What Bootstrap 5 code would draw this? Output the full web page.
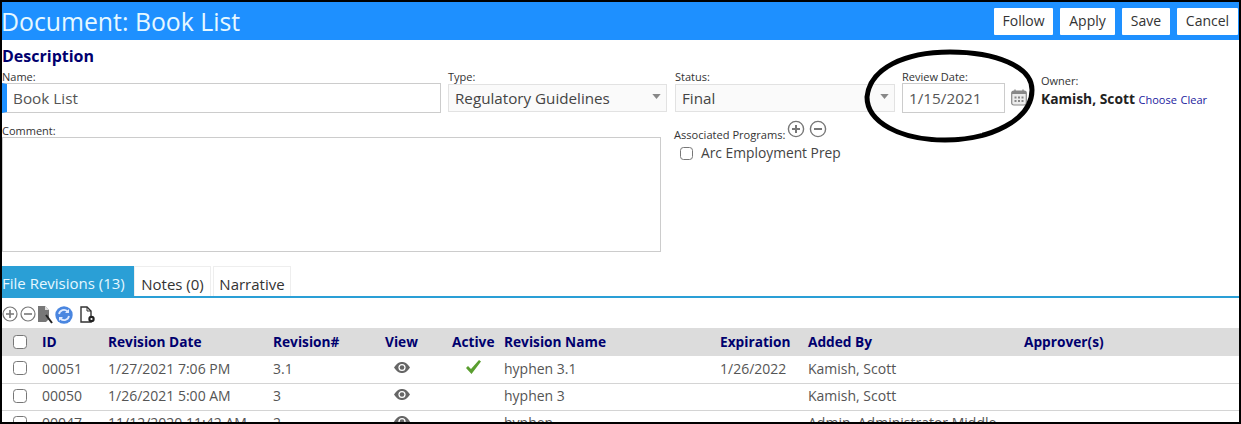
<!DOCTYPE html>
<html lang="en">
<head>
  <meta charset="UTF-8">
  <meta name="viewport" content="width=device-width, initial-scale=1.0">
  <title>Document: Book List</title>
  <link rel="stylesheet" href="https://cdn.jsdelivr.net/npm/bootstrap@5.3.0/dist/css/bootstrap.min.css">
  <style>
    html, body { height: 424px; overflow: hidden; background: #fff; }
    body { font-family: "Open Sans", "Liberation Sans", sans-serif; color: #444; font-size: 14px; }
    .doc-frame { position: relative; height: 424px; border: 2px solid #000; overflow: hidden; }
    .doc-head { height: 38px; background: #1e90ff; padding-right: 1px; }
    .doc-title { font-size: 24.8px; font-weight: 400; color: #e6f8ff; margin: 0 0 0 -1px; line-height: 36px; }
    .head-btn { background: #fff; color: #333; border: 0; border-radius: 1px; height: 27px; padding: 0 0 2px; font-size: 14px; margin-left: 7px; }
    .head-btn:hover { background: #fff; color: #333; }
    .w-follow { width: 59px; } .w-apply { width: 55px; } .w-save { width: 48px; } .w-cancel { width: 61px; }
    .sec-title { font-size: 16px; font-weight: 700; color: #00006e; line-height: 20px; margin: 6px 0 0; }
    .fld-label { display: block; font-size: 11px; line-height: 13px; color: #333; margin: 0; }
    .fld-row { margin-top: 4px; }
    .fld-name { width: 439px; margin-right: 7px; }
    .fld-type { width: 219px; margin-right: 8px; }
    .fld-status { width: 220px; margin-right: 7px; }
    .fld-date { width: 103px; }
    .fld-owner { margin-left: 14px; padding-top: 4px; }
    .fld-input { height: 30px; border: 1px solid #ccc; border-radius: 0; font-size: 15.3px; color: #555; padding: 0 6px; box-shadow: none; }
    .fld-name .fld-input { border-left: 5px solid #1e90ff; padding-left: 6px; }
    .fld-select { height: 28px; margin-top: 1px; border: 1px solid #e2e2e2; border-radius: 0; background-color: #fafafa; font-size: 15.2px; color: #444; padding: 0 20px 0 6px; background-size: 9px 5px; background-position: right 5px top 9px;
      background-image: url("data:image/svg+xml,%3Csvg xmlns='http://www.w3.org/2000/svg' viewBox='0 0 10 6'%3E%3Cpath fill='%23888' d='M0 0h10L5 6z'/%3E%3C/svg%3E"); }
    .cal-icon { margin: 19px 0 0 6px; }
    .owner-name { font-size: 13.8px; font-weight: 700; color: #222; line-height: 23px; }
    .owner-link { font-size: 11px; color: #1a1a9e; text-decoration: none; }
    .fld-comment { width: 659px; margin-right: 13px; margin-top: 11px; }
    .fld-comment textarea { height: 115px; border: 1px solid #ccc; border-radius: 0; resize: none; box-shadow: none; }
    .assoc-box { margin-top: 7px; }
    .assoc-label { font-size: 11.1px; line-height: 13px; margin-top: 8px; color: #333; }
    .assoc-icons { margin-left: 2px; }
    .prog-check { margin: 2px 0 0 6px; font-size: 13.8px; color: #444; }
    .prog-check input { width: 13px; height: 13px; margin: 0 8px 0 0; border: 1px solid #777; border-radius: 2px; }
    .doc-tabs { margin-top: 14px; border-bottom: 2px solid #2a9fd6; height: 32px; }
    .doc-tab { display: block; height: 30px; line-height: 35px; font-size: 15px; color: #333; background: #fff; border: 1px solid #eee; border-bottom: 0; text-decoration: none; padding: 0; text-align: center; margin-right: 2px; white-space: nowrap; }
    .doc-tab.on { background: #2a9fd6; color: #e6f8ff; border: 0; width: 132px; margin-right: 0; text-align: left; }
    .tab-notes { width: 77px; } .tab-narr { width: 78px; }
    .tool-row { height: 30px; padding-top: 8px; gap: 1px; }
    .rev-table { table-layout: fixed; width: 1237px; margin: 0; font-size: 14px; color: #555; }
    .rev-table th { background: #dcdcdc; color: #00006e; font-weight: 700; height: 28px; padding: 0; vertical-align: middle; border: 0; font-size: 13.7px; }
    .rev-table td { height: 27px; padding: 0 0 2px; vertical-align: middle; border-bottom: 1px solid #d4d4d4; color: #555; white-space: nowrap; }
    .rev-table input { width: 14px; height: 14px; margin: 0 0 0 11px; border: 1px solid #777; border-radius: 2px; display: block; }
    .c-sel { width: 40px; } .c-id { width: 66px; } .c-date { width: 165px; } .c-rev { width: 112px; }
    .c-view { width: 67px; } .c-act { width: 52px; } .c-name { width: 216px; } .c-exp { width: 88px; }
    .c-add { width: 216px; }
    .eye-mark { display: block; margin: 0 0 2px 9px; }
    .ok-mark { display: block; margin: 0 0 3px 14px; }
    .ring-mark { position: absolute; left: 860px; top: 47px; }
  </style>
</head>
<body>
  <div class="doc-frame">
    <div class="doc-head d-flex justify-content-between align-items-center">
      <h1 class="doc-title">Document: Book List</h1>
      <div class="d-flex">
        <button class="btn head-btn w-follow">Follow</button>
        <button class="btn head-btn w-apply">Apply</button>
        <button class="btn head-btn w-save">Save</button>
        <button class="btn head-btn w-cancel">Cancel</button>
      </div>
    </div>

    <h2 class="sec-title">Description</h2>
    <div class="d-flex fld-row">
      <div class="fld-name">
        <label class="fld-label">Name:</label>
        <input class="form-control fld-input" value="Book List">
      </div>
      <div class="fld-type">
        <label class="fld-label">Type:</label>
        <select class="form-select fld-select"><option>Regulatory Guidelines</option></select>
      </div>
      <div class="fld-status">
        <label class="fld-label">Status:</label>
        <select class="form-select fld-select"><option>Final</option></select>
      </div>
      <div class="fld-date">
        <label class="fld-label">Review Date:</label>
        <input class="form-control fld-input" value="1/15/2021">
      </div>
      <svg class="cal-icon" width="16" height="17" viewBox="0 0 16 17">
        <rect x="0.7" y="2" width="14.6" height="14" rx="2" fill="#ececec" stroke="#888" stroke-width="1.2"/>
        <rect x="1" y="2" width="14" height="3" fill="#888"/>
        <path d="M4 0.5v3M12 0.5v3" stroke="#888" stroke-width="1.4"/>
        <path d="M3.5 7.5h2v2h-2zM7 7.5h2v2H7zM10.5 7.5h2v2h-2zM3.5 11h2v2h-2zM7 11h2v2H7zM10.5 11h2v2h-2z" fill="#888"/>
      </svg>
      <div class="fld-owner">
        <label class="fld-label">Owner:</label>
        <span class="owner-name">Kamish, Scott</span>
        <a class="owner-link" href="#">Choose</a>
        <a class="owner-link" href="#">Clear</a>
      </div>
    </div>

    <div class="d-flex">
      <div class="fld-comment">
        <label class="fld-label">Comment:</label>
        <textarea class="form-control"></textarea>
      </div>
      <div class="assoc-box">
        <div class="d-flex align-items-start">
          <span class="assoc-label">Associated Programs:</span>
          <svg class="assoc-icons" width="40" height="18" viewBox="0 0 40 18" fill="none" stroke="#777" stroke-width="1.4">
            <circle cx="9" cy="9" r="7.6"/><path d="M5 9h8M9 5v8" stroke-width="2"/>
            <circle cx="31" cy="9" r="7.6"/><path d="M27 9h8" stroke-width="2"/>
          </svg>
        </div>
        <div class="d-flex align-items-center prog-check">
          <input type="checkbox" class="form-check-input"><span>Arc Employment Prep</span>
        </div>
      </div>
    </div>

    <div class="doc-tabs d-flex">
      <a class="doc-tab on" href="#">File Revisions (13)</a>
      <a class="doc-tab tab-notes" href="#">Notes (0)</a>
      <a class="doc-tab tab-narr" href="#">Narrative</a>
    </div>

    <div class="tool-row d-flex align-items-start">
      <svg width="16" height="16" viewBox="0 0 16 16" fill="none" stroke="#777" stroke-width="1.2"><circle cx="8" cy="8" r="7"/><path d="M4 8h8M8 4v8" stroke-width="1.6"/></svg>
      <svg width="17" height="16" viewBox="0 0 17 16" fill="none" stroke="#777" stroke-width="1.2"><circle cx="9" cy="8" r="7"/><path d="M5 8h8" stroke-width="1.6"/></svg>
      <svg width="16" height="18" viewBox="0 0 16 18"><path d="M1 0h7l4 4v9l-3 3H1z" fill="#777"/><path d="M8 0v4h4z" fill="#ddd"/><path d="M9 9l6 8" stroke="#222" stroke-width="2"/></svg>
      <svg width="20" height="18" viewBox="0 0 20 18"><circle cx="10" cy="9" r="8.700" fill="#4a86e0"/><path d="M5 8a5 5 0 0 1 8.500-2.500M15 10a5 5 0 0 1-8.500 2.500" fill="none" stroke="#dfeaff" stroke-width="1.800"/><path d="M15 3v4h-4zM5 15v-4h4z" fill="#dfeaff"/></svg>
      <svg class="ms-1" width="17" height="18" viewBox="0 0 17 18"><path d="M2 1h6l4 4v11H2z" fill="#fff" stroke="#333" stroke-width="1.400"/><path d="M8 1v4h4" fill="none" stroke="#333"/><circle cx="12.500" cy="13" r="3.200" fill="#222"/><circle cx="12.500" cy="13" r="1.100" fill="#fff"/></svg>
    </div>

    <table class="table rev-table">
      <colgroup>
        <col class="c-sel"><col class="c-id"><col class="c-date"><col class="c-rev"><col class="c-view"><col class="c-act"><col class="c-name"><col class="c-exp"><col class="c-add"><col>
      </colgroup>
      <thead>
        <tr>
          <th><input type="checkbox" class="form-check-input"></th>
          <th>ID</th><th>Revision Date</th><th>Revision#</th><th>View</th><th>Active</th><th>Revision Name</th><th>Expiration</th><th>Added By</th><th>Approver(s)</th>
        </tr>
      </thead>
      <tbody>
        <tr>
          <td><input type="checkbox" class="form-check-input"></td>
          <td>00051</td><td>1/27/2021 7:06 PM</td><td>3.1</td>
          <td><svg class="eye-mark" width="16" height="11" viewBox="0 0 16 11"><path d="M0 5.500C3 1 5.500 0 8 0s5 1 8 5.500C13 10 10.500 11 8 11S3 10 0 5.500z" fill="#666"/><circle cx="8" cy="5.500" r="3.600" fill="#fff"/><circle cx="8" cy="5.500" r="2.300" fill="#666"/></svg></td>
          <td><svg class="ok-mark" width="15" height="14" viewBox="0 0 15 14"><path d="M0 8l2-2 3 3 8-9 2 1.500L5.500 14z" fill="#5a9e2f"/></svg></td>
          <td>hyphen 3.1</td><td>1/26/2022</td><td>Kamish, Scott</td><td></td>
        </tr>
        <tr>
          <td><input type="checkbox" class="form-check-input"></td>
          <td>00050</td><td>1/26/2021 5:00 AM</td><td>3</td>
          <td><svg class="eye-mark" width="16" height="11" viewBox="0 0 16 11"><path d="M0 5.500C3 1 5.500 0 8 0s5 1 8 5.500C13 10 10.500 11 8 11S3 10 0 5.500z" fill="#666"/><circle cx="8" cy="5.500" r="3.600" fill="#fff"/><circle cx="8" cy="5.500" r="2.300" fill="#666"/></svg></td>
          <td></td>
          <td>hyphen 3</td><td></td><td>Kamish, Scott</td><td></td>
        </tr>
        <tr>
          <td><input type="checkbox" class="form-check-input"></td>
          <td>00047</td><td>11/12/2020 11:42 AM</td><td>2</td>
          <td><svg class="eye-mark" width="16" height="11" viewBox="0 0 16 11"><path d="M0 5.500C3 1 5.500 0 8 0s5 1 8 5.500C13 10 10.500 11 8 11S3 10 0 5.500z" fill="#666"/><circle cx="8" cy="5.500" r="3.600" fill="#fff"/><circle cx="8" cy="5.500" r="2.300" fill="#666"/></svg></td>
          <td></td>
          <td>hyphen</td><td></td><td>Admin, Administrator Middle</td><td></td>
        </tr>
      </tbody>
    </table>

    <svg class="ring-mark" width="178" height="98" viewBox="0 0 178 98" fill="none">
      <path d="M5 48C8 19 43 3 88 3c45 0 82 14 82 38 0 30-42 50-87 50C38 91 5 73 5 48z" stroke="#000" stroke-width="5"/>
    </svg>
  </div>
  <script src="https://cdn.jsdelivr.net/npm/bootstrap@5.3.0/dist/js/bootstrap.bundle.min.js"></script>
</body>
</html>
